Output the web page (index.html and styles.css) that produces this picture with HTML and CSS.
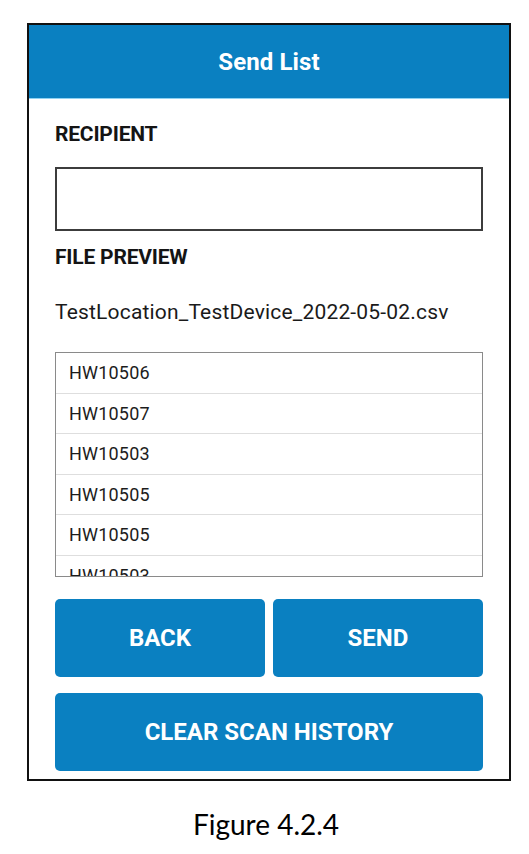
FILE: index.html
```html
<!DOCTYPE html>
<html lang="en">
<head>
<meta charset="utf-8">
<title>Send List</title>
<link rel="stylesheet" href="styles.css">
</head>
<body>
<div class="frame">
  <header class="appbar">Send List</header>
  <main class="content">
    <div class="label recipient-label">RECIPIENT</div>
    <div class="input"></div>
    <div class="label preview-label">FILE PREVIEW</div>
    <div class="filename">TestLocation_TestDevice_2022-05-02.csv</div>
    <div class="list">
      <div class="row">HW10506</div>
      <div class="row">HW10507</div>
      <div class="row">HW10503</div>
      <div class="row">HW10505</div>
      <div class="row">HW10505</div>
      <div class="row">HW10503</div>
    </div>
    <div class="btn-row">
      <div class="btn">BACK</div>
      <div class="btn">SEND</div>
    </div>
    <div class="btn btn-wide">CLEAR SCAN HISTORY</div>
  </main>
</div>
<div class="caption">Figure 4.2.4</div>
</body>
</html>
```

FILE: styles.css
```css
html, body {
  margin: 0;
  padding: 0;
  background: #ffffff;
}

body {
  font-family: Roboto, "Liberation Sans", sans-serif;
  color: #161616;
}

.frame {
  box-sizing: border-box;
  margin: 23px 0 0 27px;
  width: 484px;
  border: 2px solid #111;
  background: #fff;
}

.appbar {
  height: 73px;
  background: #0a80c1;
  border-bottom: 1px solid #8fd2f2;
  color: #fff;
  font-weight: 700;
  font-size: 24px;
  display: flex;
  align-items: center;
  justify-content: center;
  letter-spacing: 0.1px;
}

.content {
  padding: 23px 26px 8px;
  display: flex;
  flex-direction: column;
}

.label {
  font-size: 21px;
  line-height: 25px;
  font-weight: 700;
  color: #141414;
  letter-spacing: -0.2px;
}

.input {
  box-sizing: border-box;
  margin-top: 20px;
  height: 64px;
  border: 2px solid #3c3c3c;
}

.preview-label {
  margin-top: 14px;
}

.filename {
  margin-top: 30px;
  font-size: 21px;
  line-height: 25px;
  color: #1a1a1a;
  letter-spacing: 0.18px;
}

.list {
  box-sizing: border-box;
  margin-top: 27px;
  height: 225px;
  border: 1px solid #8a8a8a;
  overflow: hidden;
}

.row {
  box-sizing: border-box;
  height: 40.5px;
  line-height: 39.5px;
  padding-left: 13px;
  font-size: 18px;
  color: #1c1c1c;
  letter-spacing: 0.2px;
  border-bottom: 1px solid #dedede;
}

.btn-row {
  margin-top: 22px;
  display: flex;
  gap: 8px;
}

.btn {
  flex: 1;
  height: 78px;
  border-radius: 5px;
  background: #0a80c1;
  color: #fff;
  font-size: 24px;
  font-weight: 700;
  display: flex;
  align-items: center;
  justify-content: center;
}

.btn-wide {
  flex: none;
  margin-top: 16px;
}

.caption {
  margin-top: 26px;
  text-align: center;
  font-family: Lato, "Open Sans", sans-serif;
  font-size: 28px;
  color: #000;
  padding-left: 3px;
}
```
